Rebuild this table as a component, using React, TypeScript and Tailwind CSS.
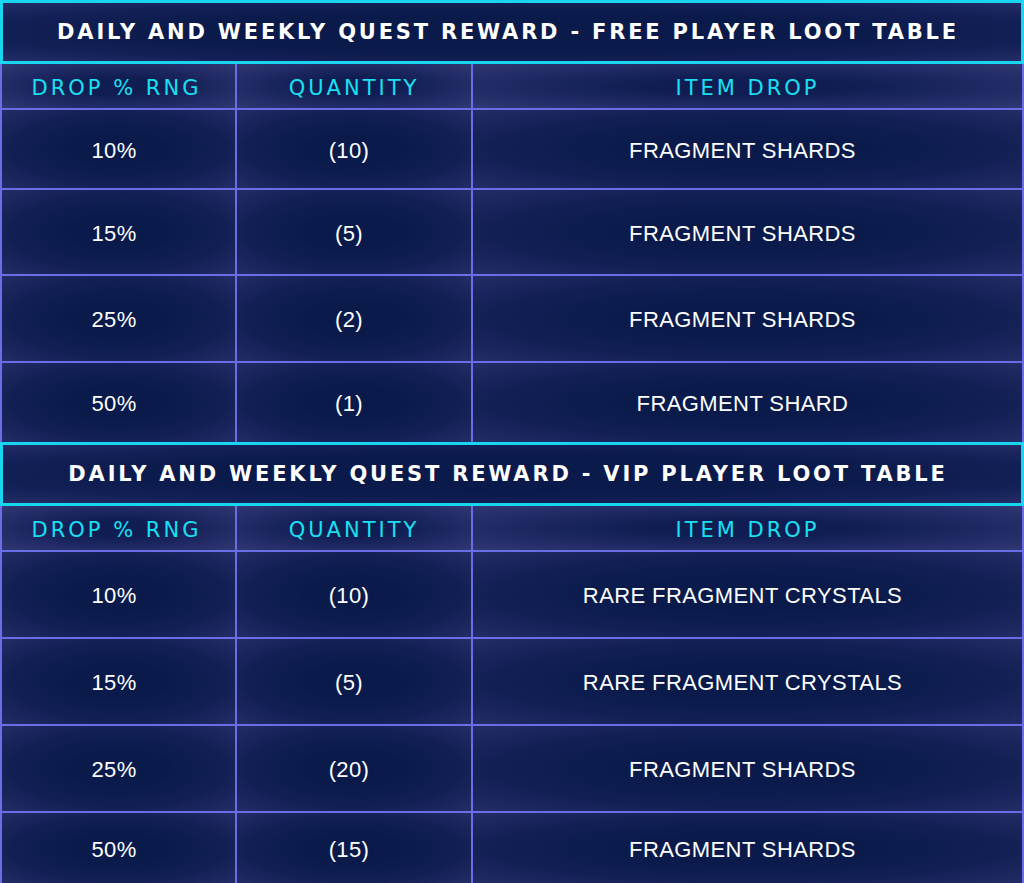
import React from "react";

type Row = { pct: string; qty: string; item: string; h: string };

const table1: Row[] = [
  { pct: "10%", qty: "(10)", item: "FRAGMENT SHARDS", h: "h-[78px]" },
  { pct: "15%", qty: "(5)", item: "FRAGMENT SHARDS", h: "h-[84px]" },
  { pct: "25%", qty: "(2)", item: "FRAGMENT SHARDS", h: "h-[85px]" },
  { pct: "50%", qty: "(1)", item: "FRAGMENT SHARD", h: "h-[79px]" },
];

const table2: Row[] = [
  { pct: "10%", qty: "(10)", item: "RARE FRAGMENT CRYSTALS", h: "h-[85px]" },
  { pct: "15%", qty: "(5)", item: "RARE FRAGMENT CRYSTALS", h: "h-[85px]" },
  { pct: "25%", qty: "(20)", item: "FRAGMENT SHARDS", h: "h-[85px]" },
  { pct: "50%", qty: "(15)", item: "FRAGMENT SHARDS", h: "h-[71px]" },
];

const cellBg =
  "bg-[radial-gradient(ellipse_at_center,#0a1b4b_30%,#121f55_65%,#242c66_100%)]";
const headBg =
  "bg-[radial-gradient(ellipse_at_center,#0f1d52_25%,#1e2862_60%,#313873_100%)]";

function Title({ text }: { text: string }) {
  return (
    <div className="h-[64px] border-[3px] border-[#18d6f0] bg-[radial-gradient(ellipse_at_50%_50%,#0a1a4a_45%,#132057_75%,#232c66_100%)] flex items-center justify-center pr-[8px] pt-[2px]">
      <span className="font-['DejaVu_Sans',sans-serif] font-bold text-[21px] tracking-[2.8px] text-white">
        {text}
      </span>
    </div>
  );
}

function Table({ title, rows }: { title: string; rows: Row[] }) {
  const head = "font-['DejaVu_Sans',sans-serif] text-[21px] tracking-[3px] text-[#18e0f2]";
  const body = "font-['Liberation_Sans',sans-serif] text-[22px] tracking-[0.4px] text-white";
  return (
    <div>
      <Title text={title} />
      <div className="grid grid-cols-[233px_234px_1fr] gap-[2px] px-[2px] bg-[#6a6ee6]">
        <div className={`h-[44px] flex items-center justify-center pr-[4px] pt-[5px] ${headBg}`}>
          <span className={head}>DROP % RNG</span>
        </div>
        <div className={`h-[44px] flex items-center justify-center pt-[5px] ${headBg}`}>
          <span className={head}>QUANTITY</span>
        </div>
        <div className={`h-[44px] flex items-center justify-center pt-[5px] ${headBg}`}>
          <span className={head}>ITEM DROP</span>
        </div>
        {rows.map((r, i) => (
          <React.Fragment key={i}>
            <div className={`${r.h} flex items-center justify-center pr-[9px] pt-[2px] ${cellBg}`}>
              <span className={body}>{r.pct}</span>
            </div>
            <div className={`${r.h} flex items-center justify-center pr-[10px] pt-[2px] ${cellBg}`}>
              <span className={body}>{r.qty}</span>
            </div>
            <div className={`${r.h} flex items-center justify-center pr-[10px] pt-[2px] ${cellBg}`}>
              <span className={body}>{r.item}</span>
            </div>
          </React.Fragment>
        ))}
      </div>
    </div>
  );
}

export default function App() {
  return (
    <div className="w-[1024px] h-[883px] overflow-hidden bg-[#0b1b4b]">
      <Table title="DAILY AND WEEKLY QUEST REWARD - FREE PLAYER LOOT TABLE" rows={table1} />
      <Table title="DAILY AND WEEKLY QUEST REWARD - VIP PLAYER LOOT TABLE" rows={table2} />
    </div>
  );
}
